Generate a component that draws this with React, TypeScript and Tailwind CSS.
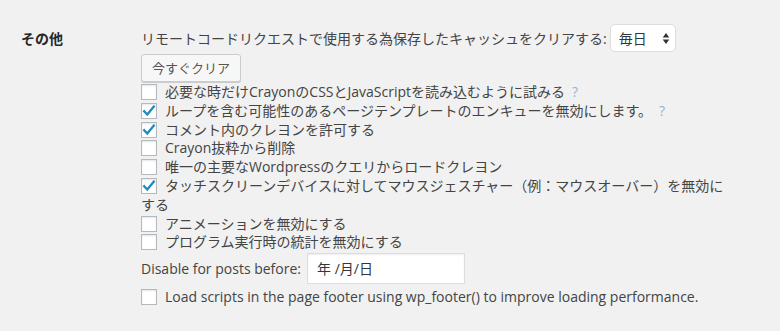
import React from "react"

type OptionRow = {
  label: string
  checked?: boolean
  help?: boolean
}

const rows: OptionRow[] = [
  { label: "必要な時だけCrayonのCSSとJavaScriptを読み込むように試みる", help: true },
  { label: "ループを含む可能性のあるページテンプレートのエンキューを無効にします。", checked: true, help: true },
  { label: "コメント内のクレヨンを許可する", checked: true },
  { label: "Crayon抜粋から削除" },
  { label: "唯一の主要なWordpressのクエリからロードクレヨン" },
  { label: "タッチスクリーンデバイスに対してマウスジェスチャー（例：マウスオーバー）を無効にする", checked: true },
  { label: "アニメーションを無効にする" },
  { label: "プログラム実行時の統計を無効にする" },
]

const Checkbox = ({ checked }: { checked?: boolean }) => (
  <span className="inline-block align-[-3px] w-4 h-4 mr-2 bg-white border border-[#b4b9be] shadow-[inset_0_1px_2px_rgba(0,0,0,0.1)] relative">
    {checked && (
      <svg viewBox="0 0 16 16" className="absolute left-[-1px] top-[-1px] w-4 h-4">
        <path d="M3.2 8.2 L6.3 11.6 L12.8 3.6" fill="none" stroke="#1e8cbe" strokeWidth="2.3" strokeLinecap="square" />
      </svg>
    )}
  </span>
)

const App = () => {
  return (
    <div
      className="w-[780px] h-[331px] bg-[#f1f1f1] text-[#444] text-[14px] overflow-hidden"
      style={{ fontFamily: '"Open Sans", "Noto Sans CJK JP", sans-serif' }}
    >
      <div className="flex pl-[21px] pt-[24px]">
        {/* row heading */}
        <div className="w-[120px] shrink-0 h-[28px] flex items-center font-bold text-[#23282d]">その他</div>

        <div className="w-[590px]">
          <div className="flex items-center h-[28px] gap-[3px]">
            <span className="whitespace-nowrap">リモートコードリクエストで使用する為保存したキャッシュをクリアする:</span>
            <div className="w-[66px] shrink-0 h-[28px] bg-white border border-[#ddd] rounded-[5px] flex items-center justify-between pl-[8px] pr-[5px] text-[#32373c]">
              <span>毎日</span>
              <svg viewBox="0 0 8 14" className="w-[8px] h-[13px]">
                <path d="M4 1 L7.5 6 H0.5 Z M4 13 L7.5 8 H0.5 Z" fill="#333" />
              </svg>
            </div>
          </div>

          <button className="mt-[2px] h-[28px] px-[10px] bg-[#f7f7f7] border border-[#ccc] rounded-[3px] shadow-[0_1px_0_#ccc] text-[13px] text-[#555] leading-[26px]">
            今すぐクリア
          </button>

          <div className="mt-[1px] leading-[18.8px]">
            {rows.map((r) => (
              <label key={r.label} className="block">
                <Checkbox checked={r.checked} />
                {r.label}
                {r.help && <span className="ml-[7px] text-[#8cb6d8]">?</span>}
              </label>
            ))}
          </div>

          <div className="flex items-center gap-[6px] mt-[1px]">
            <span>Disable for posts before:</span>
            <div className="w-[158px] h-[31px] bg-white border border-[#ddd] shadow-[inset_0_1px_2px_rgba(0,0,0,0.07)] flex items-center pl-[9px] text-[#32373c]">
              年 /月/日
            </div>
          </div>

          <label className="block mt-[3px] leading-[19px] whitespace-nowrap">
            <Checkbox />
            Load scripts in the page footer using wp_footer() to improve loading performance.
          </label>
        </div>
      </div>
    </div>
  )
}

export default App
